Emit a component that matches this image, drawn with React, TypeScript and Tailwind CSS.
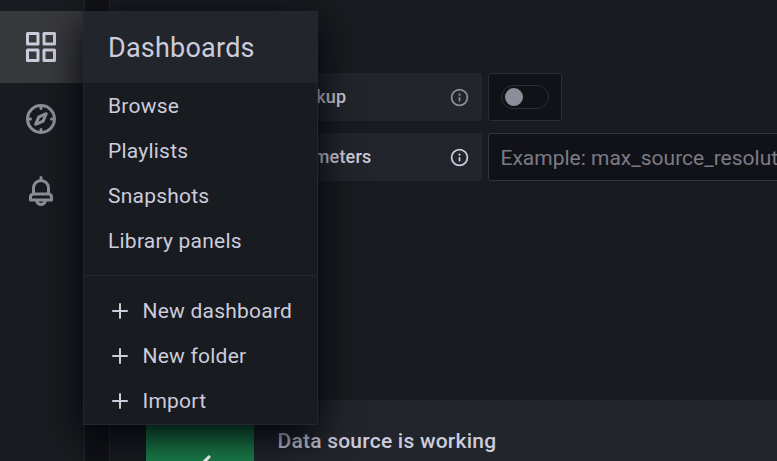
import React from 'react';

const ICONS = {
  apps: 'M10,13H3a1,1,0,0,0-1,1v7a1,1,0,0,0,1,1h7a1,1,0,0,0,1-1V14A1,1,0,0,0,10,13ZM9,20H4V15H9ZM21,2H14a1,1,0,0,0-1,1v7a1,1,0,0,0,1,1h7a1,1,0,0,0,1-1V3A1,1,0,0,0,21,2ZM20,9H15V4h5Zm1,4H14a1,1,0,0,0-1,1v7a1,1,0,0,0,1,1h7a1,1,0,0,0,1-1V14A1,1,0,0,0,21,13Zm-1,7H15V15h5ZM10,2H3A1,1,0,0,0,2,3v7a1,1,0,0,0,1,1h7a1,1,0,0,0,1-1V3A1,1,0,0,0,10,2ZM9,9H4V4H9Z',
  compass:
    'M12,2A10,10,0,1,0,22,12,10,10,0,0,0,12,2Zm1,17.93V19a1,1,0,0,0-2,0v.93A8,8,0,0,1,4.07,13H5a1,1,0,0,0,0-2H4.07A8,8,0,0,1,11,4.07V5a1,1,0,0,0,2,0V4.07A8,8,0,0,1,19.93,11H19a1,1,0,0,0,0,2h.93A8,8,0,0,1,13,19.93ZM15.14,7.55l-5,2.12a1,1,0,0,0-.52.52l-2.12,5a1,1,0,0,0,.21,1.1,1,1,0,0,0,.7.29.93.93,0,0,0,.4-.09l5-2.12a1,1,0,0,0,.52-.52l2.12-5a1,1,0,0,0-1.31-1.31Zm-2.49,5.1-2.28,1,1-2.28,2.28-1Z',
  bell: 'M18,13.18V10a6,6,0,0,0-5-5.91V3a1,1,0,0,0-2,0V4.09A6,6,0,0,0,6,10v3.18A3,3,0,0,0,4,16v2a1,1,0,0,0,1,1H8.14a4,4,0,0,0,7.72,0H19a1,1,0,0,0,1-1V16A3,3,0,0,0,18,13.18ZM8,10a4,4,0,0,1,8,0v3H8Zm4,10a2,2,0,0,1-1.72-1h3.44A2,2,0,0,1,12,20Zm6-3H6V16a1,1,0,0,1,1-1H17a1,1,0,0,1,1,1Z',
  info: 'M12,2A10,10,0,1,0,22,12,10,10,0,0,0,12,2Zm0,18a8,8,0,1,1,8-8A8,8,0,0,1,12,20Zm0-8.5a1,1,0,0,0-1,1v3a1,1,0,0,0,2,0v-3A1,1,0,0,0,12,11.5Zm0-4a1.25,1.25,0,1,0,1.25,1.25A1.25,1.25,0,0,0,12,7.5Z',
  plus: 'M19,11H13V5a1,1,0,0,0-2,0v6H5a1,1,0,0,0,0,2h6v6a1,1,0,0,0,2,0V13h6a1,1,0,0,0,0-2Z',
  check: 'M18.71,7.21a1,1,0,0,0-1.42,0L9.84,14.67,6.71,11.53A1,1,0,1,0,5.29,13l3.84,3.84a1,1,0,0,0,1.42,0l8.16-8.16A1,1,0,0,0,18.71,7.21Z',
};

function Icon({ name, className }: { name: keyof typeof ICONS; className: string }) {
  return (
    <svg viewBox="0 0 24 24" fill="currentColor" className={className} aria-hidden="true">
      <path d={ICONS[name]} />
    </svg>
  );
}

function Sidebar() {
  return (
    <nav className="flex w-[85px] shrink-0 flex-col border-r border-[#25272c] bg-[#181b1f] pt-[11px] text-[#8e8e9a]">
      <div className="flex h-[72px] items-center bg-[#38393d] pl-[23px] text-[#ccccdc]">
        <Icon name="apps" className="size-9" />
      </div>
      <div className="flex h-[72px] items-center pl-[23px]">
        <Icon name="compass" className="size-9" />
      </div>
      <div className="flex h-[72px] items-center pl-[23px]">
        <Icon name="bell" className="size-9" />
      </div>
    </nav>
  );
}

function FieldLabel({ text, iconClass }: { text: string; iconClass: string }) {
  return (
    <div className="mr-1.5 flex h-12 w-[336px] shrink-0 items-center justify-between rounded-[3px] bg-[#22252b] px-3 text-[18px] font-medium tracking-[0.01071em]">
      <span className="pb-0.5">{text}</span>
      <Icon name="info" className={iconClass} />
    </div>
  );
}

function Content() {
  return (
    <main className="flex min-w-0 flex-1 flex-col border-l border-[#25272c] bg-[#181b1f] pl-9 pt-[73px]">
      <div className="flex">
        <FieldLabel text="Disable metrics lookup" iconClass="size-[21px] text-[#8e8e9a]" />
        <div className="flex h-12 w-[74px] items-center rounded-[3px] border border-[#2d2e34] bg-[#111217] px-3">
          <div className="flex h-6 w-12 items-center rounded-full border border-[#2d2e34] pl-[3px]">
            <div className="size-[18px] rounded-full bg-[#8e8e9a]" />
          </div>
        </div>
      </div>
      <div className="mt-3 flex">
        <FieldLabel text="Custom query parameters" iconClass="size-[21px] text-[#ccccdc]" />
        <div className="flex h-12 w-[400px] shrink-0 items-center rounded-[3px] border border-[#34353b] bg-[#111217] px-[11.5px] pt-[3px] text-[21px] whitespace-nowrap text-[#7b7b87]">
          Example: max_source_resolution=5m&amp;timeout=10
        </div>
      </div>
      <div className="mt-[219px] flex h-[126px] shrink-0 bg-[#22252b]">
        <div className="flex w-[108px] items-center justify-center bg-[#1a7f4b] text-white">
          <Icon name="check" className="size-9" />
        </div>
        <div className="pt-[25px] pl-[23.5px] text-[21px] leading-[32px] font-medium tracking-[0.01071em]">
          Data source is working
        </div>
      </div>
    </main>
  );
}

function DashboardsMenu() {
  return (
    <div className="absolute top-[11px] left-[83px] h-[414px] w-[235px] border border-[#25272c] bg-[#181b1f] text-[21px] tracking-[0.01071em] shadow-[0_12px_36px_rgb(1,4,9)]">
      <div className="flex h-[71px] items-center bg-[#22252b] pt-0.5 pl-6 text-[27px]">Dashboards</div>
      <ul>
        {['Browse', 'Playlists', 'Snapshots', 'Library panels'].map((label) => (
          <li key={label} className="flex h-[45px] items-center pt-0.5 pl-6">
            {label}
          </li>
        ))}
      </ul>
      <div className="mt-3 mb-3 h-px bg-[#25272c]" />
      <ul>
        {['New dashboard', 'New folder', 'Import'].map((label) => (
          <li key={label} className="flex h-[45px] items-center gap-[10.5px] pl-6">
            <Icon name="plus" className="size-6" />
            <span className="pt-0.5">{label}</span>
          </li>
        ))}
      </ul>
    </div>
  );
}

export default function App() {
  return (
    <div className="relative flex h-[461px] w-[777px] overflow-hidden bg-[#111217] font-[Roboto,sans-serif] text-[#ccccdc]">
      <Sidebar />
      <div className="w-6 shrink-0" />
      <Content />
      <DashboardsMenu />
    </div>
  );
}
